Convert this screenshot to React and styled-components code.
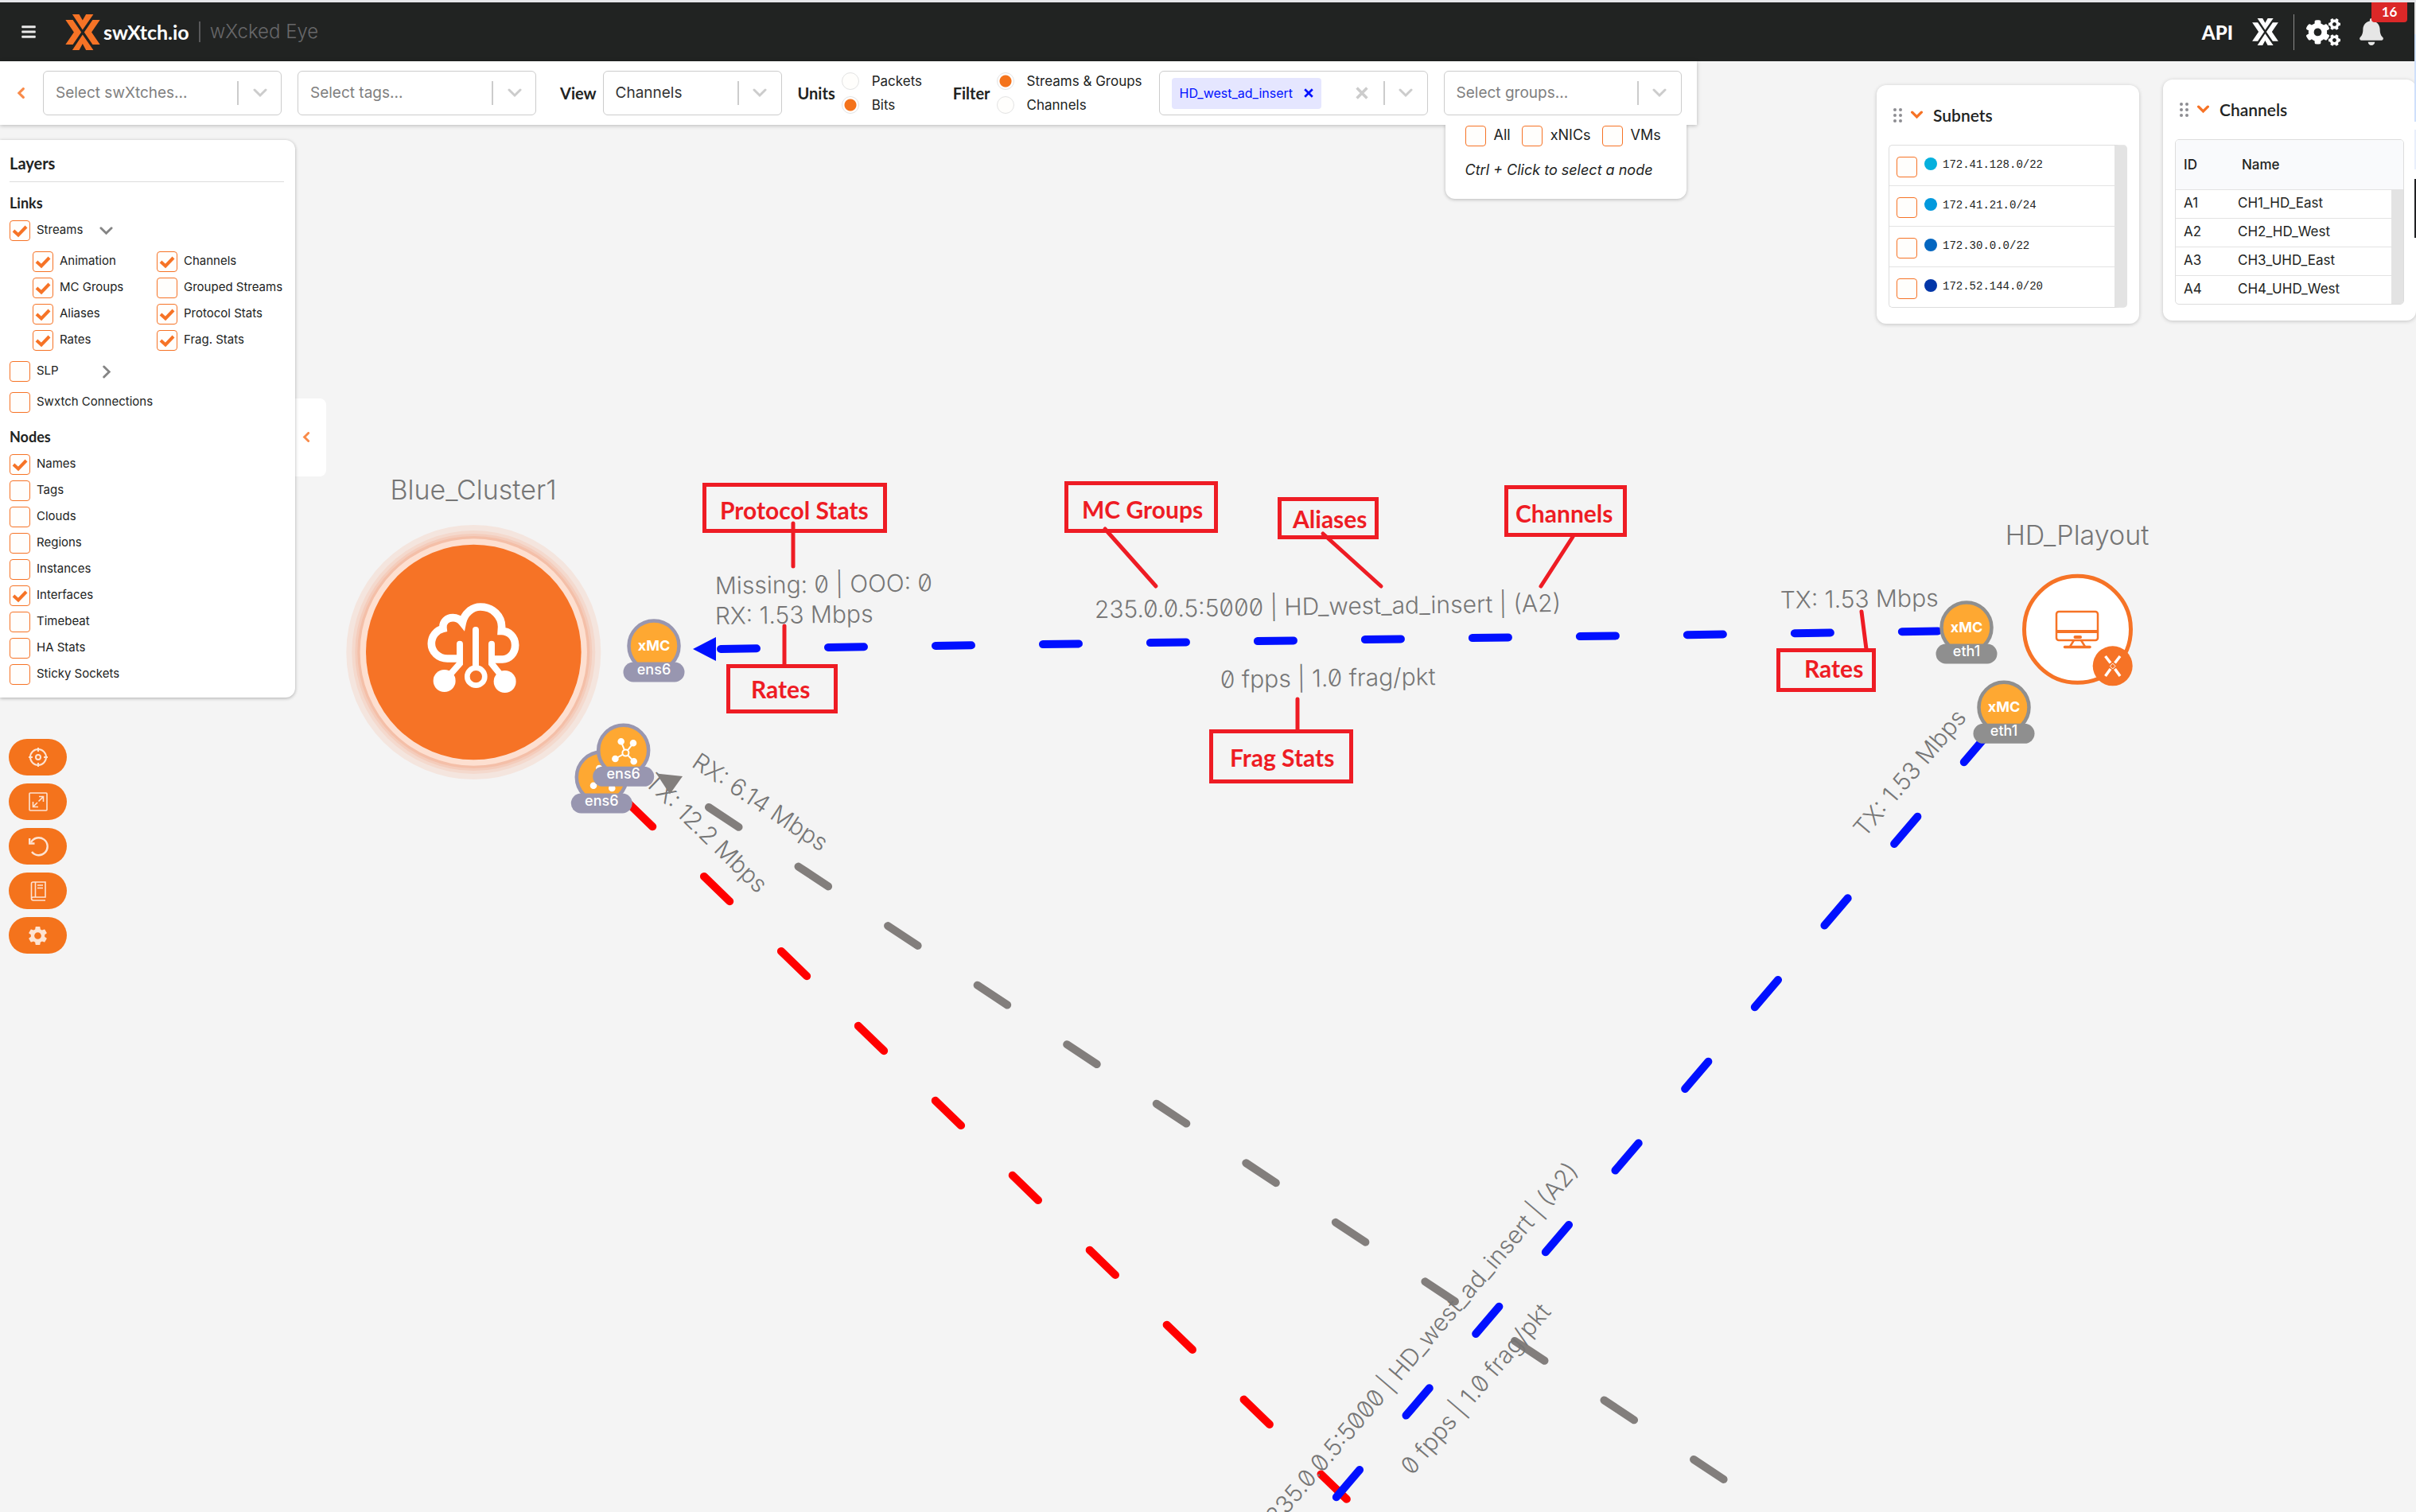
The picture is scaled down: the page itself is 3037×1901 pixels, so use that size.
import React from "react";
import styled, { createGlobalStyle, css } from "styled-components";
import { FaBars, FaBell, FaCogs } from "react-icons/fa";
import { MdSettings } from "react-icons/md";

const ORANGE = "#f67326";
const RED = "#ee1c24";
const BLUE = "#0010ff";
const LABEL = "#767676";
const SANS = `Inter, "Liberation Sans", sans-serif`;
const HEADING = `Lato, "Open Sans", sans-serif`;

const GlobalStyle = createGlobalStyle`
  * {
    box-sizing: border-box;
  }
  body {
    margin: 0;
    background: #f4f4f4;
    color: #212322;
    font-family: ${SANS};
    font-size: 18px;
  }
  button, input, select {
    font: inherit;
    color: inherit;
  }
  button {
    border: 0;
    padding: 0;
    background: none;
    cursor: pointer;
  }
`;

const Page = styled.div`
  position: relative;
  min-height: 100vh;
  overflow: hidden;
  border-top: 3px solid #e6e6ea;
`;

/* sliver of the neighbouring window along the right edge */
const EdgeStrip = styled.div`
  position: absolute;
  top: 0;
  right: 0;
  z-index: 5;
  width: 2px;
  height: 296px;
  background: linear-gradient(
    #e4e4e4 0 40px,
    #cfe0fb 40px 150px,
    #ffffff 150px 160px,
    #e8effb 160px 210px,
    #ffffff 210px 222px,
    #202124 222px
  );
`;

/* ---------- glyphs ---------- */

const chevronPaths = {
  down: "M2 5l7 7 7-7",
  left: "M12 2L5 9l7 7",
  right: "M6 2l7 7-7 7"
};

const Chevron = ({ dir = "down", size, weight = 3 }) => (
  <svg width={size} height={size} viewBox="0 0 18 18" fill="none">
    <path
      d={chevronPaths[dir]}
      stroke="currentColor"
      strokeWidth={weight}
      strokeLinecap="round"
    />
  </svg>
);

const Cross = ({ size }) => (
  <svg width={size} height={size} viewBox="0 0 10 10">
    <path d="M1 1l8 8M9 1l-8 8" stroke="currentColor" strokeWidth="2.200" />
  </svg>
);

const XLogo = ({ width, height, color }) => (
  <svg width={width} height={height} viewBox="247 51 131 136" fill={color}>
    <path d="M273 51h26l13 23 13-23h28l-41 59z" />
    <path d="M273 187h26l13-24 13 24h28l-41-59z" />
    <path d="M247 72h28l32 47-32 47h-28l32-47z" />
    <path d="M378 72h-28l-32 47 32 47h28l-32-47z" />
  </svg>
);

/* ---------- header ---------- */

const HeaderBar = styled.header`
  position: relative;
  display: flex;
  align-items: center;
  justify-content: space-between;
  height: 74px;
  padding: 0 39px 0 26px;
  background: #212322;
  color: #fff;
`;

const HeaderGroup = styled.div`
  display: flex;
  align-items: center;
`;

const MenuButton = styled.button`
  display: flex;
  margin-right: 36px;
  color: #e8e8e8;
`;

const Brand = styled.a`
  display: flex;
  align-items: center;
  color: #fff;
  text-decoration: none;
  font: 700 25px ${HEADING};

  svg {
    margin-right: 4px;
  }
`;

const ProductName = styled.span`
  margin-left: 12px;
  padding-left: 12px;
  border-left: 2px solid #58585a;
  color: #68686a;
  font: 300 24px/26px ${SANS};
`;

const ApiLink = styled.a`
  margin-right: 24px;
  color: #fff;
  text-decoration: none;
  font: 900 24px ${HEADING};
`;

const Divider = styled.span`
  width: 1px;
  height: 45px;
  margin: 0 15px 0 19px;
  background: #8c8c8c;
`;

const IconButton = styled.button`
  display: flex;
  margin-right: ${({ $gap }) => $gap || 0}px;
  color: ${({ $color }) => $color || "#fff"};
`;

const AlertCount = styled.span`
  position: absolute;
  top: 0;
  right: 11px;
  width: 45px;
  height: 25px;
  border-radius: 0 0 4px 4px;
  background: #db2828;
  text-align: center;
  font: 700 17px/23px ${HEADING};
`;

const Header = () => (
  <HeaderBar>
    <HeaderGroup>
      <MenuButton aria-label="Menu">
        <FaBars size={20} />
      </MenuButton>
      <Brand href="#">
        <XLogo width={44} height={45} color={ORANGE} />
        swXtch.io
        <ProductName>wXcked Eye</ProductName>
      </Brand>
    </HeaderGroup>
    <HeaderGroup>
      <ApiLink href="#api">API</ApiLink>
      <XLogo width={33} height={34} color="#fff" />
      <Divider />
      <IconButton aria-label="Settings" $gap={22}>
        <FaCogs size={43} />
      </IconButton>
      <IconButton aria-label="Alerts" $color="#e6e6e6">
        <FaBell size={34} />
      </IconButton>
      <AlertCount>16</AlertCount>
    </HeaderGroup>
  </HeaderBar>
);

/* ---------- form controls ---------- */

const CheckLabel = styled.label`
  display: inline-flex;
  align-items: flex-start;
  gap: ${({ $gap }) => $gap || 8}px;
  position: relative;
  min-height: 26px;
  font-size: ${({ $size }) => $size || 15}px;
  line-height: 24px;
  white-space: nowrap;

  input {
    appearance: none;
    flex: none;
    width: 26px;
    height: 26px;
    margin: 0;
    border: 1px solid ${ORANGE};
    border-radius: 4px;
    background: #fffefc;
  }

  svg {
    position: absolute;
    top: 0;
    left: 0;
    color: ${ORANGE};
  }

  input:not(:checked) + svg {
    display: none;
  }
`;

const Check = ({ label, checked, gap, size }) => (
  <CheckLabel $gap={gap} $size={size}>
    <input type="checkbox" defaultChecked={checked} />
    <svg width="26" height="26" fill="none">
      <path d="M5 13L11 18.500L21 8" stroke="currentColor" strokeWidth="4" />
    </svg>
    {label}
  </CheckLabel>
);

const control = css`
  height: 56px;
  border: 1px solid #ccc;
  border-radius: 6px;
  background: #fff;
`;

const SelectBox = styled.span`
  ${control}
  position: relative;
  display: flex;
  flex: none;
  align-items: center;
  width: ${({ $width }) => $width}px;

  select {
    appearance: none;
    width: 100%;
    height: 100%;
    padding: 0 60px 2px 15px;
    border: 0;
    outline: 0;
    background: none;
    color: ${({ $filled }) => ($filled ? "#333" : "#808080")};
    font-size: 19px;
  }
`;

const SelectArrow = styled.span`
  position: absolute;
  right: 0;
  display: flex;
  align-items: center;
  justify-content: center;
  width: 55px;
  height: 30px;
  border-left: 2px solid #ccc;
  color: #ccc;
  pointer-events: none;
`;

const Select = ({ label, width, value, placeholder }) => (
  <SelectBox $width={width} $filled={!!value}>
    <select aria-label={label}>
      <option>{value || placeholder}</option>
    </select>
    <SelectArrow>
      <Chevron size={18} />
    </SelectArrow>
  </SelectBox>
);

const Chip = styled.span`
  display: flex;
  align-items: center;
  gap: 14px;
  height: 39px;
  margin-left: 15px;
  padding: 0 10px;
  border-radius: 4px;
  background: #e5e6ff;
  color: ${BLUE};
  font-size: 16px;
`;

const CrossButton = styled.button`
  display: flex;
  color: ${({ $color }) => $color};
  margin: 0 ${({ $right }) => $right || 0}px 0 ${({ $push }) => ($push ? "auto" : 0)};
`;

/* ---------- toolbar ---------- */

const Toolbar = styled.section`
  position: relative;
  z-index: 2;
  display: flex;
  align-items: center;
  gap: 20px;
  height: 80px;
  padding: 0 19px 0 20px;
  background: #fff;
  box-shadow: 0 1px 5px rgba(0, 0, 0, 0.25);
`;

const CollapseButton = styled.button`
  display: flex;
  color: #f98b4a;
`;

const Field = styled.div`
  display: flex;
  flex: none;
  align-items: center;
  gap: 8px;
  margin-left: ${({ $left }) => $left || 0}px;
`;

const FieldName = styled.span`
  font: 700 20px/24px ${HEADING};
`;

const Radios = styled.div`
  display: flex;
  flex-direction: column;
  gap: 8px;
  width: ${({ $width }) => $width}px;
`;

const RadioLabel = styled.label`
  display: flex;
  align-items: center;
  gap: 16px;
  height: 22px;
  font-size: 17px;
  white-space: nowrap;

  input {
    appearance: none;
    flex: none;
    width: 22px;
    height: 22px;
    margin: 0;
    border: 1px solid #e3e3e3;
    border-radius: 50%;
    background: #fffefc;
  }

  input:checked {
    background: radial-gradient(#f4731c 0 7px, #fff 8px);
  }
`;

const Radio = ({ name, label, checked }) => (
  <RadioLabel>
    <input type="radio" name={name} defaultChecked={checked} />
    {label}
  </RadioLabel>
);

const NodePicker = styled.div`
  position: absolute;
  top: 100%;
  right: 13px;
  width: 303px;
  height: 93px;
  padding: 1px 25px;
  border-radius: 0 0 12px 12px;
  background: #fff;
  box-shadow: 0 1px 4px rgba(0, 0, 0, 0.25);
  clip-path: inset(0 -6px -6px -6px);

  div {
    display: flex;
    gap: 14px;
  }

  p {
    margin: 18px 0 0;
    font-size: 18px;
    line-height: 24px;
    font-style: italic;
    white-space: nowrap;
  }
`;

/* ---------- layers ---------- */

const LayersRow = styled.div`
  display: flex;
  align-items: center;
  width: 410px;
  margin-top: 19px;
`;

const LayersCard = styled.section`
  position: relative;
  width: 371px;
  padding: 17px 14px 16px 12px;
  border-radius: 0 12px 12px 0;
  background: #fff;
  box-shadow: 0 1px 4px rgba(0, 0, 0, 0.3);

  h2 {
    margin: 0;
    padding-bottom: 11px;
    border-bottom: 1px solid #ddd;
    font: 700 20px/24px ${HEADING};
  }

  h3 {
    margin: 14px 0 10px;
    font: 700 18px/24px ${HEADING};
  }

  h3:last-of-type {
    margin-top: 18px;
  }
`;

const LayerList = styled.div`
  display: flex;
  flex-direction: column;
  align-items: flex-start;
  gap: ${({ $gap }) => $gap}px;
`;

const LayerGrid = styled.div`
  display: grid;
  grid-template-columns: 156px auto;
  grid-auto-rows: 26px;
  row-gap: 7px;
  padding-left: 29px;
`;

const Expandable = styled.div`
  display: flex;
  align-items: center;
  justify-content: space-between;
  width: 130px;
`;

const ExpandButton = styled.button`
  display: flex;
  color: #858585;
`;

const DrawerHandle = styled.button`
  display: flex;
  flex: 1;
  align-items: center;
  justify-content: center;
  height: 98px;
  margin-top: 46px;
  padding-right: 10px;
  border-radius: 0 8px 8px 0;
  background: #fff;
  color: #f98b4a;
`;

/* each pair is one row of the grid */
const streamLayers = [
  ["Animation", true],
  ["Channels", true],
  ["MC Groups", true],
  ["Grouped Streams", false],
  ["Aliases", true],
  ["Protocol Stats", true],
  ["Rates", true],
  ["Frag. Stats", true]
];

const nodeLayers = [
  ["Names", true],
  ["Tags", false],
  ["Clouds", false],
  ["Regions", false],
  ["Instances", false],
  ["Interfaces", true],
  ["Timebeat", false],
  ["HA Stats", false],
  ["Sticky Sockets", false]
];

const Layers = () => (
  <LayersRow>
    <LayersCard>
      <h2>Layers</h2>
      <h3>Links</h3>
      <LayerList $gap={13}>
        <Expandable>
          <Check label="Streams" checked />
          <ExpandButton aria-label="Collapse streams">
            <Chevron size={17} />
          </ExpandButton>
        </Expandable>
        <LayerGrid>
          {streamLayers.map(([label, checked]) => (
            <Check key={label} label={label} checked={checked} />
          ))}
        </LayerGrid>
        <Expandable>
          <Check label="SLP" />
          <ExpandButton aria-label="Expand SLP">
            <Chevron dir="right" size={17} />
          </ExpandButton>
        </Expandable>
        <Check label="Swxtch Connections" />
      </LayerList>
      <h3>Nodes</h3>
      <LayerList $gap={7}>
        {nodeLayers.map(([label, checked]) => (
          <Check key={label} label={label} checked={checked} />
        ))}
      </LayerList>
    </LayersCard>
    <DrawerHandle aria-label="Hide layers">
      <Chevron dir="left" size={13} weight={4} />
    </DrawerHandle>
  </LayersRow>
);

const ActionList = styled.nav`
  display: flex;
  flex-direction: column;
  gap: 10px;
  width: 73px;
  margin: 52px 0 0 11px;
`;

const ActionButton = styled.button`
  display: flex;
  align-items: center;
  justify-content: center;
  height: 46px;
  border-radius: 23px;
  background: #f4731c;
  color: #fde3d2;
`;

const LineIcon = styled.svg.attrs({
  width: 26,
  height: 26,
  viewBox: "0 0 26 26",
  fill: "none",
  stroke: "currentColor"
})`
  stroke-width: ${({ $weight }) => $weight || 2};
`;

const actions = [
  [
    "Center",
    <LineIcon>
      <circle cx="13" cy="13" r="10" />
      <circle cx="13" cy="13" r="3" />
      <path d="M13 1v5M13 20v5M1 13h5M20 13h5" />
    </LineIcon>
  ],
  [
    "Fit",
    <LineIcon $weight={1.6}>
      <rect x="2" y="2" width="22" height="22" rx="1" />
      <path d="M13.500 12.500L19 7M14 6.500h5.500V13M12 14l-5.500 5.500M6.500 13v6.500H13" />
    </LineIcon>
  ],
  [
    "Reset",
    <LineIcon $weight={2.4}>
      <path d="M4 8A11 11 0 1 1 5 20" />
      <path d="M2.200 3v6.500H8.500" />
    </LineIcon>
  ],
  [
    "Documentation",
    <LineIcon $weight={1.6}>
      <path d="M22 25H7a2.500 2.500 0 0 1-2.500-2.500V4A2 2 0 0 1 6.500 2H22v19H7a2 2 0 0 0-2.500 2M9.500 2v19" />
      <path d="M12 6h7M12 9.500h7" />
    </LineIcon>
  ],
  ["Options", <MdSettings size={29} />]
];

/* ---------- floating cards ---------- */

const CardRow = styled.div`
  display: flex;
  align-items: flex-start;
  gap: 30px;
`;

const Card = styled.section`
  width: ${({ $width }) => $width}px;
  margin-top: ${({ $top }) => $top}px;
  padding: 0 15px 20px;
  border-radius: 12px;
  background: #fff;
  box-shadow: 0 1px 5px rgba(0, 0, 0, 0.2);
`;

const CardHead = styled.header`
  display: flex;
  align-items: center;
  height: 75px;
  padding-left: 6px;

  svg {
    flex: none;
  }

  button {
    display: flex;
    margin: 0 13px 0 11px;
    color: ${ORANGE};
  }

  h2 {
    margin: 0;
    font: 600 21px/26px ${HEADING};
  }
`;

const Grip = () => (
  <svg width="11" height="18" viewBox="0 0 11 18" fill="#8d8d92">
    {[2, 9, 16].map((y) => (
      <React.Fragment key={y}>
        <circle cx="2" cy={y} r="2" />
        <circle cx="9" cy={y} r="2" />
      </React.Fragment>
    ))}
  </svg>
);

const SubnetList = styled.ul`
  margin: 0;
  padding: 0;
  border: 1px solid #ddd;
  border-right: 16px solid #e3e3e3;
  border-radius: 5px;
  list-style: none;
`;

const SubnetItem = styled.li`
  display: flex;
  align-items: flex-end;
  height: 51px;
  padding: 0 9px 10px;

  &:last-child {
    height: 50px;
  }

  &:not(:last-child) {
    border-bottom: 1px solid #e3e3e3;
  }

  label {
    font: 14px/20px "Liberation Mono", monospace;
  }
`;

const Dot = styled.span`
  width: 16px;
  height: 16px;
  margin: 1px -2px 0 0;
  border-radius: 50%;
  background: ${({ $color }) => $color};
`;

const subnets = [
  ["172.41.128.0/22", "#05b0dd"],
  ["172.41.21.0/24", "#0299dd"],
  ["172.30.0.0/22", "#0466c0"],
  ["172.52.144.0/20", "#0236a8"]
];

const channels = [
  ["A1", "CH1_HD_East"],
  ["A2", "CH2_HD_West"],
  ["A3", "CH3_UHD_East"],
  ["A4", "CH4_UHD_West"]
];

const TableFrame = styled.div`
  overflow: hidden;
  border: 1px solid #ddd;
  border-radius: 5px;
`;

const Table = styled.table`
  width: 100%;
  border-collapse: collapse;
  text-align: left;
  font-size: 17px;

  th {
    height: 62px;
    padding: 0 10px;
    background: #f9fafc;
    font-weight: 500;
  }

  th:nth-child(2) {
    padding-left: 15px;
  }

  td {
    height: 36px;
    padding: 0 10px 2px;
    border-top: 1px solid #e3e3e3;
  }

  td:first-child {
    width: 68px;
  }
`;

const Gutter = styled.td`
  && {
    width: 15px;
    padding: 0;
    background: #e3e3e3;
  }
`;

const TitledCard = ({ title, width, top, children }) => (
  <Card $width={width} $top={top}>
    <CardHead>
      <Grip />
      <button aria-label={`Toggle ${title}`}>
        <Chevron size={15} weight={4} />
      </button>
      <h2>{title}</h2>
    </CardHead>
    {children}
  </Card>
);

/* ---------- diagram ---------- */

const Canvas = styled.svg`
  position: absolute;
  top: -3px;
  left: 0;
  width: 100%;
  height: calc(100% + 3px);
`;

const Link = styled.path`
  fill: none;
  stroke: ${({ $color }) => $color};
  stroke-width: 10px;
  stroke-linecap: round;
  stroke-dasharray: 45 90;
`;

const LinkText = styled.text`
  fill: ${LABEL};
  font: 300 30px ${SANS};
  font-feature-settings: "zero";
`;

const NodeName = styled.text`
  fill: ${LABEL};
  font: 300 34px ${SANS};
  text-anchor: middle;
`;

const TagText = styled.text`
  fill: #fff;
  font: ${({ $bold }) => ($bold ? 700 : 500)} 18px ${SANS};
  text-anchor: middle;
`;

const NoteText = styled.text`
  fill: ${RED};
  font: 700 30px ${HEADING};
`;

const linkTexts = [
  [899, 747, -0.8, "Missing: 0 | OOO: 0"],
  [899, 785, -0.8, "RX: 1.53 Mbps"],
  [1376, 777, -0.8, "235.0.0.5:5000 | HD_west_ad_insert | (A2)"],
  [1534, 865, -0.8, "0 fpps | 1.0 frag/pkt"],
  [2238, 765, -0.8, "TX: 1.53 Mbps"],
  [868, 963, 33.5, "RX: 6.14 Mbps"],
  [809, 985, 44.2, "TX: 12.2 Mbps"],
  [2344, 1054, -49.5, "TX: 1.53 Mbps"],
  [1605, 1919, -49.5, "235.0.0.5:5000 | HD_west_ad_insert | (A2)"],
  [1775, 1856, -49.5, "0 fpps | 1.0 frag/pkt"]
];

/* frame as x, y, width, height, then the text's start and the pointer line */
const notes = [
  { box: [883, 607, 232, 63], at: [905, 653], line: "M997 658V712", text: "Protocol Stats" },
  { box: [913, 835, 140, 62], at: [944, 878], line: "M986 787V836", text: "Rates" },
  { box: [1338, 605, 193, 65], at: [1360, 652], line: "M1389 665L1453 737", text: "MC Groups" },
  { box: [1606, 625, 127, 53], at: [1625, 664], line: "M1663 671L1736 737", text: "Aliases" },
  { box: [1891, 610, 154, 65], at: [1905, 657], line: "M1977 675L1937 737", text: "Channels" },
  { box: [1520, 917, 181, 68], at: [1546, 964], line: "M1631 879V918", text: "Frag Stats" },
  { box: [2233, 815, 125, 55], at: [2268, 852], line: "M2340 769L2346 816", text: "Rates" }
];

const Note = ({ box: [x, y, w, h], at, line, text }) => (
  <g fill="none" stroke={RED} strokeWidth="5">
    <rect x={x + 2.5} y={y + 2.5} width={w - 5} height={h - 5} />
    <NoteText x={at[0]} y={at[1]} stroke="none">
      {text}
    </NoteText>
    <path d={line} strokeLinecap="round" />
  </g>
);

const Interface = ({ x, y, color, name, mesh }) => (
  <g transform={`translate(${x} ${y})`}>
    <circle r="31.500" fill="#fea832" stroke={color} strokeWidth="4.500" />
    {mesh ? (
      <g fill="#fff" stroke="#fff" strokeWidth="2">
        <path d="M2.700 3.300L-3 -11M2.700 3.300L12.300 -9M2.700 3.300L-10.300 10.700M2.700 3.300L13 14" />
        <circle cx="-3" cy="-11" r="3.300" />
        <circle cx="12.300" cy="-9" r="3.300" />
        <circle cx="-10.300" cy="10.700" r="3.300" />
        <circle cx="13" cy="14" r="3.300" />
        <circle cx="2.700" cy="3.300" r="4" fill="#fea832" />
      </g>
    ) : (
      <TagText y="6" $bold>
        xMC
      </TagText>
    )}
    <rect x="-38.500" y="20.500" width="77" height="25" rx="12.500" fill={color} />
    <TagText y="36">{name}</TagText>
  </g>
);

const Cluster = () => (
  <g transform="translate(595.300 820)">
    <circle r="160" fill="#f4e5de" />
    <circle r="153" fill="#f4d9cd" />
    <circle r="149" fill="#f4ccbb" />
    <circle r="146" fill="#f4bfa8" />
    <circle r="142.700" fill="#fddfd0" />
    <circle r="135.300" fill={ORANGE} />
    <g
      transform="scale(0.3333) translate(-496 -510)"
      fill="none"
      stroke="#fff"
      strokeWidth="24"
      strokeLinecap="round"
    >
      <path
        d="M440 534H397A60 56 0 0 1 337 478C337 450 355 427 381 421C378 394 397 380 418 380C434 380 446 388 454 398C461 364 490 339 522 339C570 339 602 376 602 414L601 430C630 430 653 452 653 483C653 515 630 537 605 537H566"
        strokeWidth="29"
        strokeLinecap="butt"
      />
      <path d="M444 479V553L404 598M564 479V553L600 598M504 426V562" />
      <circle cx="386" cy="618" r="42" fill="#fff" stroke="none" />
      <circle cx="614" cy="621" r="42" fill="#fff" stroke="none" />
      <circle cx="505" cy="602" r="33" fill={ORANGE} strokeWidth="20" />
    </g>
  </g>
);

const Playout = () => (
  <g>
    <circle cx="2611.500" cy="791.300" r="67" fill="#fff" stroke={ORANGE} strokeWidth="5" />
    <g fill="none" stroke={ORANGE} strokeWidth="2.500">
      <rect x="2585" y="769" width="52" height="36" rx="3" />
      <path d="M2585 794H2637" strokeWidth="4" />
      <path d="M2607 805L2602 813M2616 805L2621 813" />
      <path d="M2595.500 813.500H2627" strokeWidth="3.500" strokeLinecap="round" />
      <path d="M2608.500 801H2615" strokeWidth="4" strokeLinecap="round" />
    </g>
    <circle cx="2655.700" cy="837.300" r="25" fill={ORANGE} />
    <g fill="none" stroke="#fff" strokeWidth="3.500">
      <path d="M2646.500 825L2653 833.500M2665 825L2658.500 833.500M2646.500 850L2653 841M2665 850L2658.500 841" />
      <path d="M2655.700 834L2659 837.500L2655.700 841L2652.400 837.500Z" strokeWidth="1" />
    </g>
  </g>
);

const Diagram = () => (
  <Canvas>
    <Link $color="#ff0000" d="M788 1008L1694 1886" />
    <Link $color="#827e7c" d="M891 1015L2280 1935" />
    <Link $color={BLUE} d="M906 816L2470 793" />
    <Link $color={BLUE} d="M2498 924L1622 1950" />
    {linkTexts.map(([x, y, angle, text]) => (
      <LinkText key={`${x}-${y}`} transform={`translate(${x} ${y}) rotate(${angle})`}>
        {text}
      </LinkText>
    ))}
    <path d="M871 816L900 801V831Z" fill={BLUE} />
    <path d="M825 972.500L858 976L842 998.500Z" fill="#827e7c" />
    <NodeName x="595" y="628">
      Blue_Cluster1
    </NodeName>
    <NodeName x="2611" y="685">
      HD_Playout
    </NodeName>
    <Cluster />
    <Playout />
    <Interface x={822} y={812} color="#9896b0" name="ens6" />
    <Interface x={756.3} y={977} color="#9896b0" name="ens6" mesh />
    <Interface x={783.7} y={943.3} color="#9896b0" name="ens6" mesh />
    <Interface x={2472} y={789} color="#8f8f8f" name="eth1" />
    <Interface x={2519} y={889.3} color="#8f8f8f" name="eth1" />
    {notes.map((note) => (
      <Note key={note.line} {...note} />
    ))}
  </Canvas>
);

const Workspace = styled.main`
  position: relative;
  display: flex;
  align-items: flex-start;
  justify-content: space-between;
`;

const App = () => (
  <Page>
    <GlobalStyle />
    <Diagram />
    <Header />
    <Workspace>
      <div>
        <Toolbar>
          <CollapseButton aria-label="Hide toolbar">
            <Chevron dir="left" size={14} weight={4} />
          </CollapseButton>
          <Select label="swXtches" width={300} placeholder="Select swXtches..." />
          <Select label="Tags" width={300} placeholder="Select tags..." />
          <Field $left={10}>
            <FieldName>View</FieldName>
            <Select label="View" width={225} value="Channels" />
          </Field>
          <Field>
            <FieldName>Units</FieldName>
            <Radios $width={120}>
              <Radio name="units" label="Packets" />
              <Radio name="units" label="Bits" checked />
            </Radios>
          </Field>
          <Field>
            <FieldName>Filter</FieldName>
            <Radios $width={184}>
              <Radio name="filter" label="Streams &amp; Groups" checked />
              <Radio name="filter" label="Channels" />
            </Radios>
          </Field>
          <SelectBox $width={338}>
            <Chip>
              HD_west_ad_insert
              <CrossButton $color={BLUE} aria-label="Remove HD_west_ad_insert">
                <Cross size={12} />
              </CrossButton>
            </Chip>
            <CrossButton $color="#ccc" $push $right={74} aria-label="Clear">
              <Cross size={16} />
            </CrossButton>
            <SelectArrow>
              <Chevron size={18} />
            </SelectArrow>
          </SelectBox>
          <Select label="Groups" width={299} placeholder="Select groups..." />
          <NodePicker>
            <div>
              <Check label="All" gap={10} size={18} />
              <Check label="xNICs" gap={10} size={18} />
              <Check label="VMs" gap={10} size={18} />
            </div>
            <p>Ctrl + Click to select a node</p>
          </NodePicker>
        </Toolbar>
        <Layers />
        <ActionList>
          {actions.map(([label, icon]) => (
            <ActionButton key={label} aria-label={label}>
              {icon}
            </ActionButton>
          ))}
        </ActionList>
      </div>
      <CardRow>
        <TitledCard title="Subnets" width={330} top={30}>
          <SubnetList>
            {subnets.map(([address, color]) => (
              <SubnetItem key={address}>
                <Check
                  gap={9}
                  label={
                    <>
                      <Dot $color={color} />
                      {address}
                    </>
                  }
                />
              </SubnetItem>
            ))}
          </SubnetList>
        </TitledCard>
        <TitledCard title="Channels" width={318} top={23}>
          <TableFrame>
            <Table>
              <thead>
                <tr>
                  <th>ID</th>
                  <th colSpan={2}>Name</th>
                </tr>
              </thead>
              <tbody>
                {channels.map(([id, name], i) => (
                  <tr key={id}>
                    <td>{id}</td>
                    <td>{name}</td>
                    {i === 0 && <Gutter rowSpan={channels.length} />}
                  </tr>
                ))}
              </tbody>
            </Table>
          </TableFrame>
        </TitledCard>
      </CardRow>
    </Workspace>
    <EdgeStrip />
  </Page>
);

export default App;
